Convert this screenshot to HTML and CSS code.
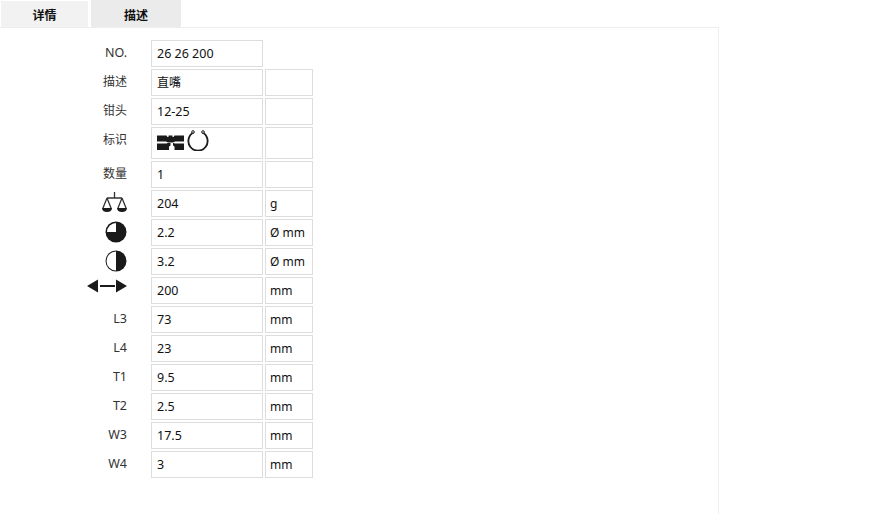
FILE: index.html
```html
<!DOCTYPE html>
<html lang="en">
<head>
    <meta charset="UTF-8">
    <meta name="viewport" content="width=device-width, initial-scale=1.0">
    <title>详情</title>
    <link rel="stylesheet" href="styles.css">
</head>
<body>
    <div class="tabs">
        <div class="tab tab-active">详情</div>
        <div class="tab">描述</div>
    </div>
    <div class="panel">
        <div class="row">
            <div class="label">NO.</div>
            <div class="cell value">26 26 200</div>
        </div>
        <div class="row">
            <div class="label cjk">描述</div>
            <div class="cell value cjk">直嘴</div>
            <div class="cell unit"></div>
        </div>
        <div class="row">
            <div class="label cjk">钳头</div>
            <div class="cell value">12-25</div>
            <div class="cell unit"></div>
        </div>
        <div class="row row-tall">
            <div class="label cjk">标识</div>
            <div class="cell value marks">
                <svg class="mark-pliers" width="27" height="15" viewBox="0 0 27 15">
                    <path fill="#1a1a1a" d="M0 .5h9.500l1 1.500h1V.5h4V2h1l1-1.500H27V6.500H18l-2 1h-5l-2-1H0z"/>
                    <path fill="#1a1a1a" d="M0 8.500h9l2-.5h2.500v2.500l-1.500 1v3.500H0zM27 8.500h-9l-1.500-.5h-.5v2.500l1.500 1v3.500H27z"/>
                </svg>
                <svg width="22" height="21" viewBox="0 0 22 21">
                    <path fill="none" stroke="#1a1a1a" stroke-width="1.800" d="M7 2.300A9.600 9.600 0 1 0 15 2.300"/>
                    <circle cx="6" cy="2" r="1.300" fill="#fff" stroke="#1a1a1a"/>
                    <circle cx="16" cy="2" r="1.300" fill="#fff" stroke="#1a1a1a"/>
                </svg>
            </div>
            <div class="cell unit"></div>
        </div>
        <div class="row">
            <div class="label cjk">数量</div>
            <div class="cell value">1</div>
            <div class="cell unit"></div>
        </div>
        <div class="row">
            <div class="label">
                <svg width="25" height="21" viewBox="0 0 25 21">
                    <path fill="none" stroke="#333" stroke-width="1.300" d="M12.500 0v6M5 6h15M5 6 .8 16.500M5 6l4.200 10.500M20 6l-4.200 10.500M20 6l4.200 10.500"/>
                    <path fill="#1a1a1a" d="M0 16h10c0 2.700-2 4-5 4s-5-1.300-5-4zM15 16h10c0 2.700-2 4-5 4s-5-1.300-5-4z"/>
                </svg>
            </div>
            <div class="cell value">204</div>
            <div class="cell unit">g</div>
        </div>
        <div class="row">
            <div class="label">
                <svg width="22" height="22" viewBox="0 0 22 22">
                    <circle cx="11" cy="11" r="10.500" fill="#1a1a1a"/>
                    <path fill="#fff" d="M11 2A9 9 0 0 0 2 11h9z"/>
                </svg>
            </div>
            <div class="cell value">2.2</div>
            <div class="cell unit">Ø mm</div>
        </div>
        <div class="row">
            <div class="label">
                <svg width="22" height="22" viewBox="0 0 22 22">
                    <circle cx="11" cy="11" r="10.500" fill="#1a1a1a"/>
                    <path fill="#fff" d="M11 1.500A9.500 9.500 0 0 0 11 20.500z"/>
                </svg>
            </div>
            <div class="cell value">3.2</div>
            <div class="cell unit">Ø mm</div>
        </div>
        <div class="row">
            <div class="label">
                <svg width="40" height="14" viewBox="0 0 40 14">
                    <path fill="#1a1a1a" d="M0 7l11-6.500v13zM40 7 29 .5v13zM13 6h15v2H13z"/>
                </svg>
            </div>
            <div class="cell value">200</div>
            <div class="cell unit">mm</div>
        </div>
        <div class="row">
            <div class="label">L3</div>
            <div class="cell value">73</div>
            <div class="cell unit">mm</div>
        </div>
        <div class="row">
            <div class="label">L4</div>
            <div class="cell value">23</div>
            <div class="cell unit">mm</div>
        </div>
        <div class="row">
            <div class="label">T1</div>
            <div class="cell value">9.5</div>
            <div class="cell unit">mm</div>
        </div>
        <div class="row">
            <div class="label">T2</div>
            <div class="cell value">2.5</div>
            <div class="cell unit">mm</div>
        </div>
        <div class="row">
            <div class="label">W3</div>
            <div class="cell value">17.5</div>
            <div class="cell unit">mm</div>
        </div>
        <div class="row">
            <div class="label">W4</div>
            <div class="cell value">3</div>
            <div class="cell unit">mm</div>
        </div>
    </div>
</body>
</html>
```

FILE: styles.css
```css
html, body {
    height: 100%;
}
body {
    margin: 0;
    display: flex;
    flex-direction: column;
    font-family: "Noto Sans", "Noto Sans CJK SC", sans-serif;
    font-size: 12.5px;
    color: #222;
    background: #fff;
    overflow: hidden;
}
.tabs {
    display: flex;
    gap: 3px;
    height: 27px;
    width: 719px;
    flex: none;
}
.tab {
    width: 90px;
    background: #ebebeb;
    text-align: center;
    font-weight: bold;
    font-size: 12px;
    line-height: 32px;
    color: #111;
}
.tab-active {
    width: 87px;
    margin: 1px 0 0 1px;
    background: #f2f2f2;
    line-height: 30px;
}
.panel {
    flex: 1;
    box-sizing: border-box;
    width: 719px;
    padding: 12px 0 0 0;
    border-top: 1px solid #eee;
    border-right: 1px solid #eee;
}
.row {
    display: flex;
    gap: 2px;
    height: 27px;
    margin-bottom: 2px;
}
.row-tall {
    height: 32px;
}
.label {
    width: 127px;
    margin-right: 22px;
    text-align: right;
    line-height: 25px;
    color: #333;
}
.label svg {
    display: block;
    margin-left: auto;
    margin-top: 2px;
}
.cell {
    box-sizing: border-box;
    border: 1px solid #ddd;
    padding-left: 5px;
    line-height: 25px;
    color: #111;
}
.cjk {
    font-size: 12px;
}
.value {
    width: 112px;
}
.unit {
    width: 48px;
    font-size: 12px;
    padding-left: 4px;
    line-height: 26px;
}
.marks {
    display: flex;
    align-items: flex-start;
    gap: 3px;
    padding-top: 2px;
}
.mark-pliers {
    margin-top: 5px;
}
```
